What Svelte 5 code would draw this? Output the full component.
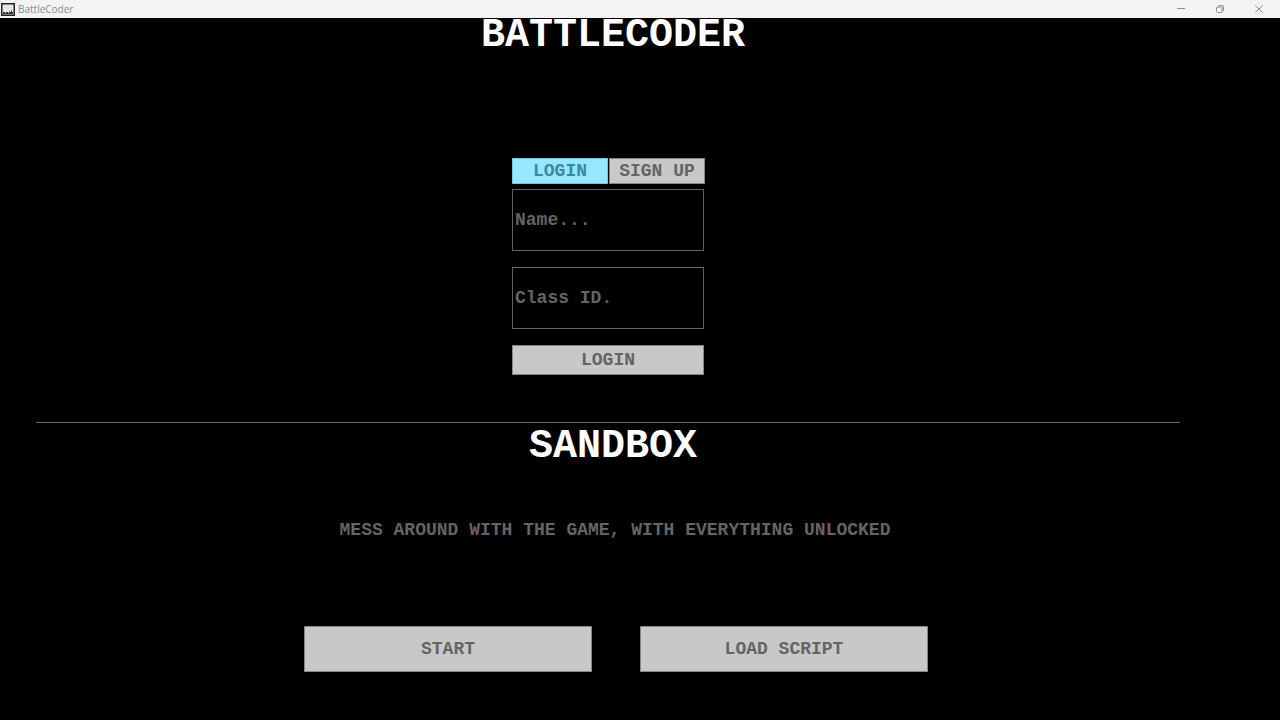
<script>
  let mode = $state('login');
  let name = $state('');
  let classId = $state('');
</script>

<div class="window">
  <header class="titlebar">
    <svg class="logo" viewBox="0 0 14 13" aria-hidden="true">
      <rect x="0.75" y="0.75" width="12.5" height="11.5" fill="#e8e8e8" stroke="#222" stroke-width="1.5" />
      <path d="M2 11V9h2v1h1V9h2v1h1V8.5h1V9h1V7.5h1V9h1v2z" fill="#333" />
    </svg>
    <span class="caption">BattleCoder</span>
    <div class="controls">
      <button aria-label="Minimize">
        <svg viewBox="0 0 10 10"><path d="M1 4.5h8" /></svg>
      </button>
      <button aria-label="Restore">
        <svg viewBox="0 0 10 10">
          <rect x="1.5" y="3" width="5.5" height="5.5" rx="1" />
          <path d="M3.5 3V2.5a1 1 0 0 1 1-1H7.5a1 1 0 0 1 1 1V6a1 1 0 0 1-1 1H7" />
        </svg>
      </button>
      <button aria-label="Close">
        <svg viewBox="0 0 10 10"><path d="M1.2 1.2l7.6 7.6M8.8 1.2L1.2 8.8" /></svg>
      </button>
    </div>
  </header>

  <main>
    <section class="account">
      <h1>BATTLECODER</h1>
      <form onsubmit={(event) => event.preventDefault()}>
        <div class="tabs">
          <button type="button" class="box" class:active={mode === 'login'} onclick={() => (mode = 'login')}>LOGIN</button>
          <button type="button" class="box" class:active={mode === 'signup'} onclick={() => (mode = 'signup')}>SIGN UP</button>
        </div>
        <input type="text" aria-label="Name" placeholder="Name..." bind:value={name} />
        <input type="text" aria-label="Class ID" placeholder="Class ID." bind:value={classId} />
        <button class="box submit">{mode === 'login' ? 'LOGIN' : 'SIGN UP'}</button>
      </form>
    </section>

    <hr />

    <section class="sandbox">
      <h2>SANDBOX</h2>
      <p>MESS AROUND WITH THE GAME, WITH EVERYTHING UNLOCKED</p>
      <div class="actions">
        <button class="box">START</button>
        <button class="box">LOAD SCRIPT</button>
      </div>
    </section>
  </main>
</div>

<style>
  :global(body) {
    background: #000;
  }

  * {
    box-sizing: border-box;
  }

  .window {
    min-height: 100vh;
    background: #000;
    font: bold 18px/20px "Liberation Mono", monospace;
    color: #646464;
  }

  .titlebar {
    display: flex;
    align-items: center;
    height: 18px;
    padding-left: 1px;
    background: #f3f3f3;
    font: 10px/18px "Open Sans", sans-serif;
    color: #8c8c8c;
  }

  .logo {
    width: 14px;
    height: 13px;
    margin-right: 3px;
  }

  .controls {
    display: flex;
    margin-left: auto;
    padding-right: 2px;
  }

  .controls button {
    display: grid;
    place-items: center;
    width: 39px;
    height: 18px;
    padding: 0;
    border: 0;
    background: none;
  }

  .controls svg {
    width: 10px;
    height: 10px;
    fill: none;
    stroke: #8c8c8c;
  }

  main {
    width: 95%;
  }

  section {
    display: flex;
    flex-direction: column;
    align-items: center;
  }

  h1,
  h2 {
    margin: 0;
    padding-left: 10px;
    font-size: 40px;
    line-height: 36px;
    color: #fff;
  }

  .account {
    padding-bottom: 47px;
  }

  form {
    display: flex;
    flex-direction: column;
    gap: 16px;
    width: 192px;
    margin-top: 104px;
  }

  .tabs {
    display: flex;
    gap: 1px;
    margin-bottom: -11px;
  }

  .tabs button {
    flex: none;
    width: 96px;
    height: 26px;
  }

  .box {
    padding: 0;
    border: 1px solid #858585;
    border-radius: 0;
    background: #c8c8c8;
    font: inherit;
    color: #646464;
  }

  .tabs .active {
    border-color: #6fc3dc;
    background: #97e8ff;
    color: #3b88a0;
  }

  input {
    width: 100%;
    height: 62px;
    padding: 0 2px;
    border: 1px solid #646464;
    border-radius: 0;
    background: #000;
    font: inherit;
    color: #c8c8c8;
  }

  input::placeholder {
    color: #646464;
    opacity: 1;
  }

  .submit {
    height: 30px;
  }

  hr {
    height: 1px;
    margin: 0 3%;
    border: 0;
    background: #5a6d68;
  }

  .sandbox {
    padding: 6px 0 40px;
  }

  p {
    margin: 55px 0 0;
    padding-left: 14px;
  }

  .actions {
    display: flex;
    gap: 48px;
    margin-top: 86px;
    padding-left: 16px;
  }

  .actions button {
    width: 288px;
    height: 46px;
  }
</style>
